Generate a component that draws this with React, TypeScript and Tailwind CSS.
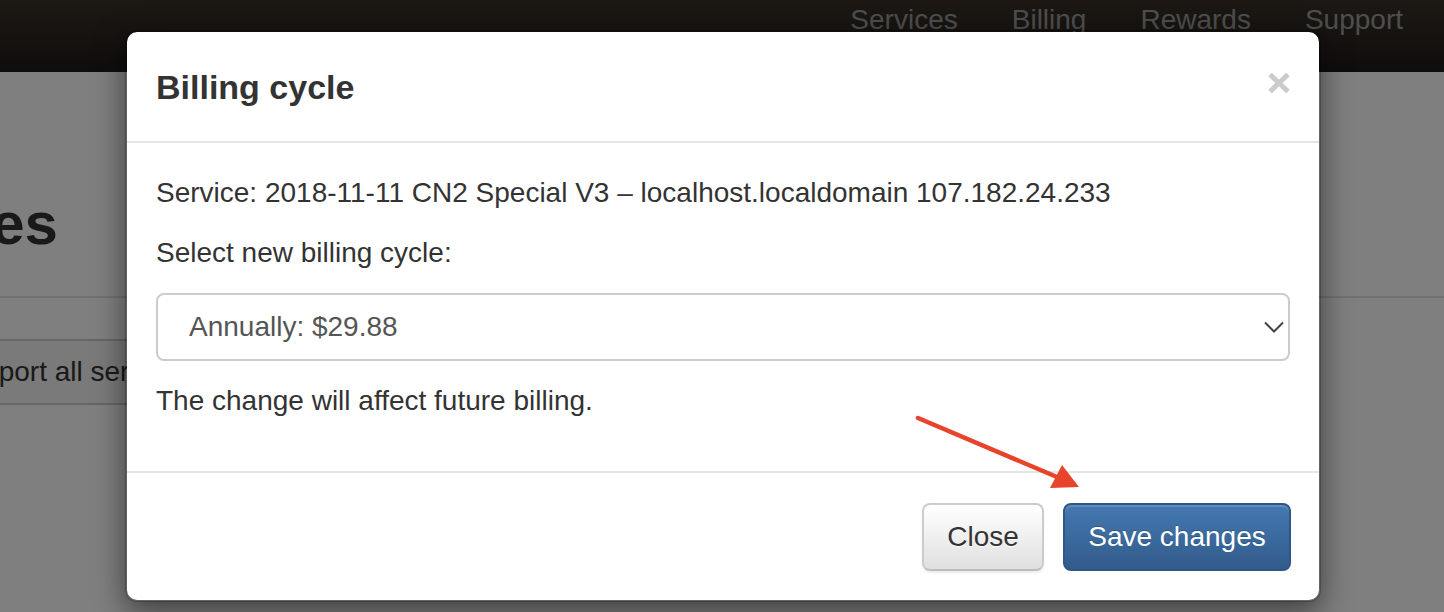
import React from 'react';

const navItems = ['Services', 'Billing', 'Rewards', 'Support'];

const CloseIcon: React.FC = () => (
  <svg width="22" height="20" viewBox="0 0 22 20" className="mt-[11px] opacity-20">
    <path d="M2 1.5 L20 18.5 M20 1.5 L2 18.5" stroke="#000" strokeWidth="5" strokeLinecap="butt" fill="none" />
  </svg>
);

const BillingCycleModal: React.FC = () => (
  <div className="absolute left-[125px] top-[30px] w-[1196px] rounded-[12px] border-2 border-black/20 bg-white bg-clip-padding shadow-[0_10px_30px_rgba(0,0,0,0.5)]">
    <div className="flex items-start justify-between border-b-2 border-[#e5e5e5] px-[29px] pt-[30px] pb-[28px]">
      <h4 className="text-[34px] font-bold leading-[51px] text-[#333]">Billing cycle</h4>
      <button className="flex">
        <CloseIcon />
      </button>
    </div>

    <div className="px-[29px] pt-[30px] pb-[50px] text-[28px] leading-[40px] text-[#333]">
      <p>Service: 2018-11-11 CN2 Special V3 – localhost.localdomain 107.182.24.233</p>
      <label className="mt-[20px] block">Select new billing cycle:</label>
      <div className="relative mt-[20px]">
        <select className="h-[68px] w-full appearance-none rounded-[8px] border-2 border-[#ccc] bg-white pl-[31px] text-[28px] text-[#555] outline-none">
          <option>Annually: $29.88</option>
        </select>
        <svg
          className="pointer-events-none absolute right-[6px] top-[28px]"
          width="20"
          height="12"
          viewBox="0 0 20 12"
        >
          <path d="M1 1.5 L10 10.5 L19 1.5" stroke="#444" strokeWidth="2" fill="none" />
        </svg>
      </div>
      <p className="mt-[20px]">The change will affect future billing.</p>
    </div>

    <div className="flex justify-end gap-[19px] border-t-2 border-[#e5e5e5] px-[28px] pt-[30px] pb-[29px]">
      <button className="h-[68px] w-[122px] rounded-[8px] border-2 border-[#ccc] border-b-[#bdbdbd] bg-gradient-to-b from-white to-[#e0e0e0] text-[28px] text-[#333] shadow-[0_2px_2px_rgba(0,0,0,0.075)] [text-shadow:0_1px_0_#fff]">
        Close
      </button>
      <button className="h-[68px] w-[228px] rounded-[8px] border-2 border-[#2e5686] bg-gradient-to-b from-[#4479b1] to-[#325b8b] text-[28px] text-white shadow-[inset_0_2px_0_rgba(255,255,255,0.15)] [text-shadow:0_-1px_0_rgba(0,0,0,0.2)]">
        Save changes
      </button>
    </div>
  </div>
);

const App: React.FC = () => {
  return (
    <div className="relative h-[612px] w-[1444px] overflow-hidden bg-white font-['Liberation_Sans',Arial,sans-serif]">
      <nav className="flex h-[72px] justify-end gap-[54px] bg-gradient-to-b from-[#3b3128] to-[#1e1b19] pr-[41px]">
        {navItems.map((item) => (
          <a key={item} className="text-[28px] leading-[40px] text-[#9d9d9d]">
            {item}
          </a>
        ))}
      </nav>

      <main>
        <h2 className="ml-[-189px] mt-[119px] whitespace-nowrap text-[60px] font-bold leading-[66px] text-[#333]">
          Services
        </h2>
        <hr className="mt-[39px] border-t-2 border-[#e2e2e2]" />
        <div className="mt-[41px] flex">
          <button className="ml-[-60px] h-[66px] whitespace-nowrap rounded-[8px] border-2 border-[#ccc] bg-[#f4f4f4] px-[24px] text-[28px] text-[#333]">
            Export all services
          </button>
        </div>
      </main>

      <div className="absolute inset-0 bg-black/50" />

      <BillingCycleModal />

      <svg className="pointer-events-none absolute left-0 top-0" width="1444" height="612">
        <line x1="918" y1="418" x2="1057" y2="477" stroke="#e8432b" strokeWidth="4.5" strokeLinecap="round" />
        <polygon points="1050,488 1062,465 1079,487" fill="#e8432b" />
      </svg>
    </div>
  );
};

export default App;
